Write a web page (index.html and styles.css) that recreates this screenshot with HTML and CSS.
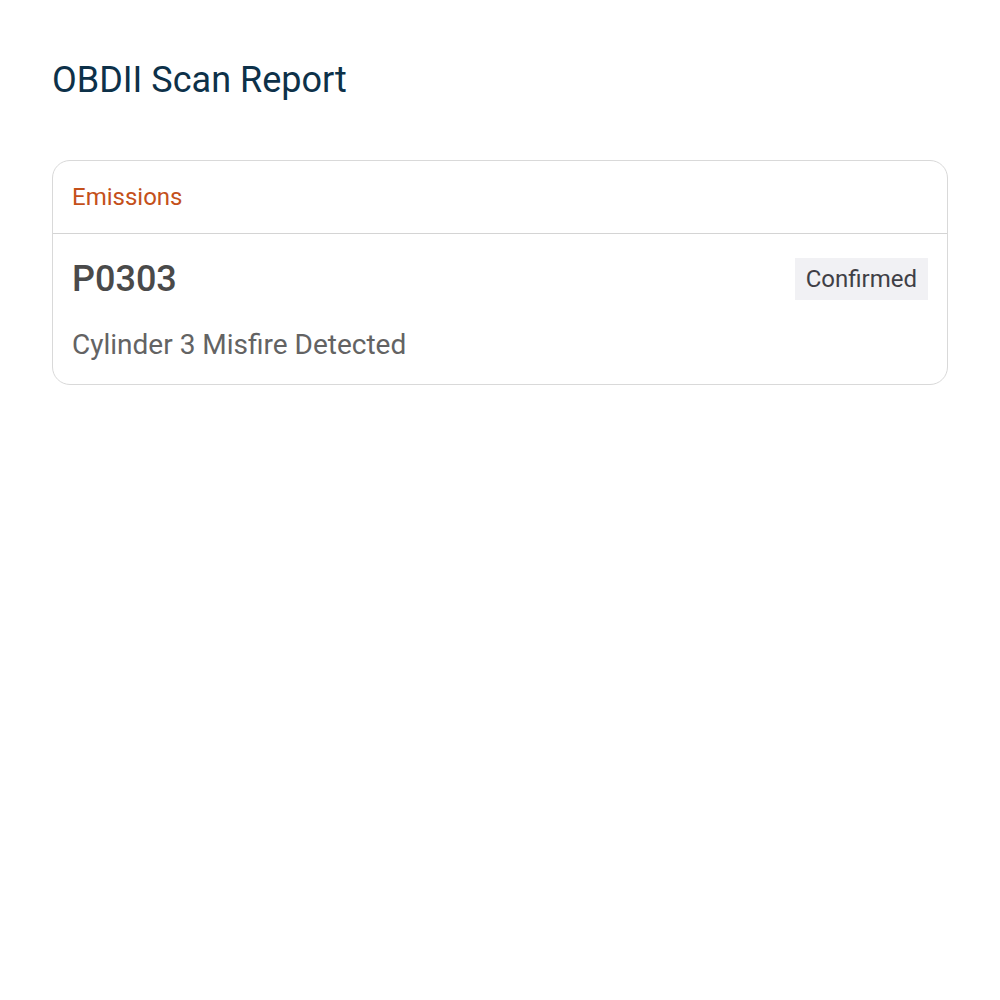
FILE: index.html
```html
<!DOCTYPE html>
<html lang="en">

<head>
    <meta charset="UTF-8">
    <meta name="viewport" content="width=device-width, initial-scale=1.0">
    <title>OBDII Scan Report</title>
    <link rel="stylesheet" href="styles.css">
</head>

<body>
    <div class="container">
        <h1 class="title">OBDII Scan Report</h1>

        <div class="card">
            <div class="card-header">Emissions</div>
            <div class="card-body">
                <div class="code-row">
                    <span class="code">P0303</span>
                    <span class="badge">Confirmed</span>
                </div>
                <p class="description">Cylinder 3 Misfire Detected</p>
            </div>
        </div>
    </div>
</body>

</html>
```

FILE: styles.css
```css
body {
    font-family: Roboto, 'Liberation Sans', Arial, sans-serif;
    margin: 0;
    padding: 0;
    background: #ffffff;
}

.container {
    padding: 56px 52px;
}

.title {
    margin: 0 0 56px 0;
    font-size: 36px;
    font-weight: 400;
    line-height: 48px;
    color: #0d3149;
}

.card {
    border: 1px solid #d9d9d9;
    border-radius: 18px;
    overflow: hidden;
}

.card-header {
    padding: 0 19px;
    height: 72px;
    line-height: 72px;
    font-size: 24px;
    color: #c4501a;
    border-bottom: 1px solid #d4d4d4;
}

.card-body {
    padding: 24px 19px 22px 19px;
}

.code-row {
    display: flex;
    align-items: center;
    justify-content: space-between;
}

.code {
    font-size: 36px;
    font-weight: 500;
    color: #4a4a4a;
}

.badge {
    background-color: #f1f1f4;
    color: #3f3f46;
    font-size: 24px;
    padding: 0 11px;
    height: 42px;
    line-height: 42px;
}

.description {
    margin: 28px 0 0 0;
    font-size: 28px;
    line-height: 34px;
    color: #636363;
}
```
